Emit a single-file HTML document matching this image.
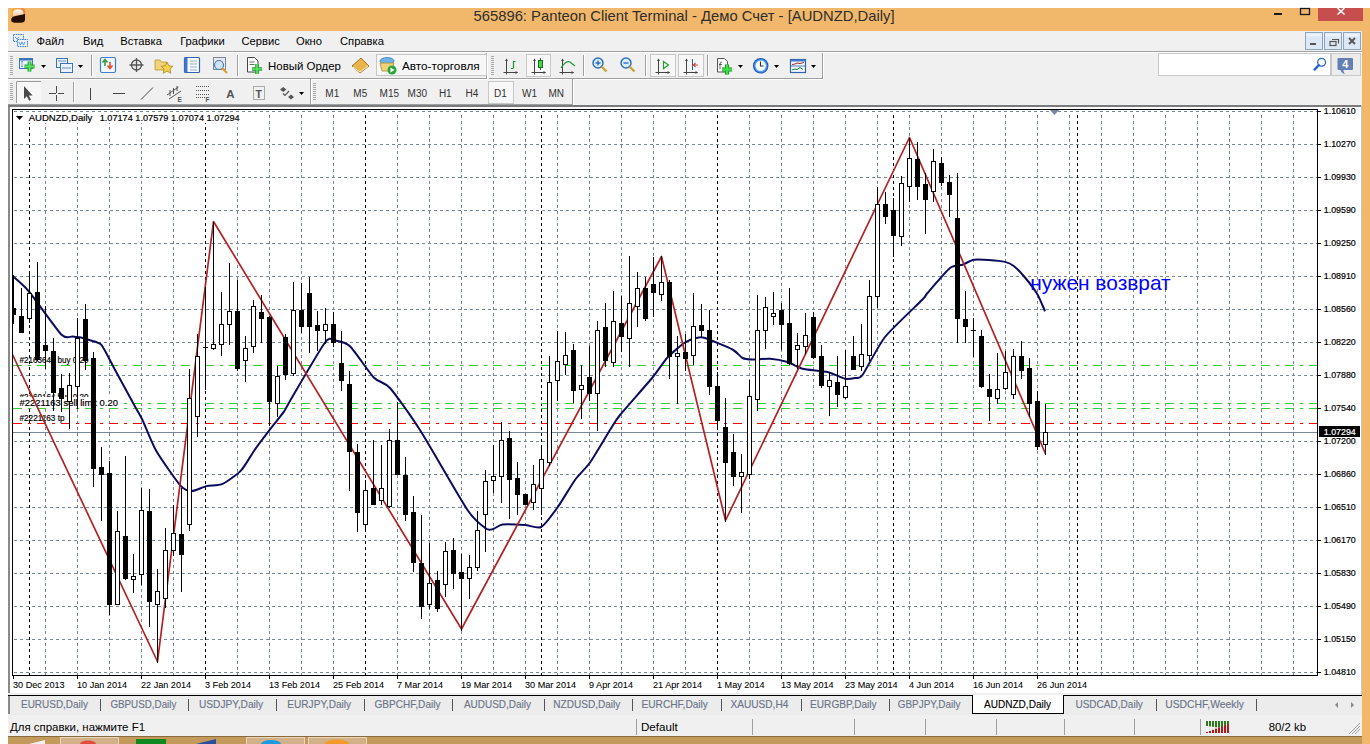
<!DOCTYPE html>
<html><head><meta charset="utf-8"><title>MT4</title>
<style>
html,body{margin:0;padding:0;background:#fff;width:1370px;height:744px;overflow:hidden}
svg{display:block}
text{font-family:"Liberation Sans", sans-serif;white-space:pre}
</style></head><body>
<svg width="1370" height="744" viewBox="0 0 1370 744">
<rect x="8" y="8" width="1362" height="736" fill="#f1b86b" />
<defs><linearGradient id="ig" x1="0" y1="0" x2="1" y2="0"><stop offset="0" stop-color="#f9b233"/><stop offset="1" stop-color="#f47a38"/></linearGradient><linearGradient id="dg" x1="0" y1="0" x2="0" y2="1"><stop offset="0" stop-color="#ffffff"/><stop offset="1" stop-color="#f8b98a"/></linearGradient></defs>
<rect x="11.3" y="8.2" width="14" height="11" rx="3.5" fill="url(#ig)"/>
<path d="M13 13.5 Q13 9.2 18.2 9.2 Q23.5 9.2 23.5 13.5 L23.5 17.5 L13 17.5 Z" fill="url(#dg)"/>
<path d="M11.2 20 Q11.2 16.5 15.5 16 L25 14 L25 19.8 Q25 22.8 20.5 22.8 L15 22.8 Q11.2 22.8 11.2 20 Z" fill="#231003"/>
<text x="473.5" y="20.5" font-size="14.6" fill="#2e2e2e" text-anchor="start" font-weight="normal" textLength="421" lengthAdjust="spacingAndGlyphs" >565896: Panteon Client Terminal - Демо Счет - [AUDNZD,Daily]</text>
<rect x="1274" y="13" width="8" height="2" fill="#1a1a1a" />
<rect x="1300.5" y="8.5" width="9" height="6" fill="none" stroke="#1a1a1a" stroke-width="1.3" />
<rect x="1318" y="8" width="45" height="13" fill="#c74e4e" />
<path d="M1337.5 8 L1344.5 14.5 M1344.5 8 L1337.5 14.5" stroke="#fff" stroke-width="1.6"/>
<rect x="8" y="31" width="1354" height="20" fill="#f0f0f0" />
<g fill="none" stroke="#3b7fd6" stroke-width="1" stroke-dasharray="1.5 0.8"><rect x="13.5" y="34.5" width="10" height="7"/><rect x="17.5" y="39.5" width="10" height="7" fill="#eef4fb"/></g><path d="M19 42 l1.5 3 l1.5 -3 l1.5 3 l1.5 -3" stroke="#3b7fd6" fill="none" stroke-width="0.8"/><path d="M15 37 l2 2 l2 -2" stroke="#3b7fd6" fill="none" stroke-width="0.8"/>
<text x="36.5" y="44.8" font-size="11.2" fill="#000" text-anchor="start" font-weight="normal" >Файл</text>
<text x="83" y="44.8" font-size="11.2" fill="#000" text-anchor="start" font-weight="normal" >Вид</text>
<text x="120.3" y="44.8" font-size="11.2" fill="#000" text-anchor="start" font-weight="normal" >Вставка</text>
<text x="180.2" y="44.8" font-size="11.2" fill="#000" text-anchor="start" font-weight="normal" >Графики</text>
<text x="241.5" y="44.8" font-size="11.2" fill="#000" text-anchor="start" font-weight="normal" >Сервис</text>
<text x="296" y="44.8" font-size="11.2" fill="#000" text-anchor="start" font-weight="normal" >Окно</text>
<text x="340" y="44.8" font-size="11.2" fill="#000" text-anchor="start" font-weight="normal" >Справка</text>
<rect x="1305.5" y="32.5" width="17" height="17" fill="#dce8f5" stroke="#8fa3bb" stroke-width="1"/>
<rect x="1306.5" y="33.5" width="15" height="3" fill="#eaf2fb"/>
<rect x="1324.5" y="32.5" width="17" height="17" fill="#dce8f5" stroke="#8fa3bb" stroke-width="1"/>
<rect x="1325.5" y="33.5" width="15" height="3" fill="#eaf2fb"/>
<rect x="1343.5" y="32.5" width="17" height="17" fill="#dce8f5" stroke="#8fa3bb" stroke-width="1"/>
<rect x="1344.5" y="33.5" width="15" height="3" fill="#eaf2fb"/>
<rect x="1310" y="43" width="6" height="2" fill="#555" />
<g fill="none" stroke="#555" stroke-width="1.2"><rect x="1330" y="41.5" width="6" height="4"/><path d="M1332 39.5 L1338.5 39.5 L1338.5 43.5"/></g>
<path d="M1349 38 L1355 44 M1355 38 L1349 44" stroke="#555" stroke-width="1.8"/>
<rect x="8" y="51" width="1354" height="1" fill="#a0a0a0" />
<rect x="8" y="52" width="1354" height="1" fill="#ffffff" />
<rect x="8" y="53" width="1354" height="52" fill="#f0f0f0" />
<rect x="8" y="78" width="479" height="1" fill="#a0a0a0" />
<rect x="486" y="53" width="1" height="26" fill="#a0a0a0" />
<rect x="8" y="79" width="480" height="1" fill="#ffffff" />
<rect x="487" y="53" width="1" height="27" fill="#ffffff" />
<rect x="489" y="78" width="334" height="1" fill="#a0a0a0" />
<rect x="822" y="53" width="1" height="26" fill="#a0a0a0" />
<rect x="489" y="79" width="335" height="1" fill="#ffffff" />
<rect x="823" y="53" width="1" height="27" fill="#ffffff" />
<rect x="8" y="104" width="303" height="1" fill="#a0a0a0" />
<rect x="310" y="79" width="1" height="26" fill="#a0a0a0" />
<rect x="8" y="105" width="304" height="1" fill="#ffffff" />
<rect x="311" y="79" width="1" height="27" fill="#ffffff" />
<rect x="311" y="104" width="262" height="1" fill="#a0a0a0" />
<rect x="572" y="79" width="1" height="26" fill="#a0a0a0" />
<rect x="311" y="105" width="263" height="1" fill="#ffffff" />
<rect x="573" y="79" width="1" height="27" fill="#ffffff" />
<rect x="10" y="56" width="3" height="1" fill="#a8a8a8" />
<rect x="10" y="58" width="3" height="1" fill="#a8a8a8" />
<rect x="10" y="60" width="3" height="1" fill="#a8a8a8" />
<rect x="10" y="62" width="3" height="1" fill="#a8a8a8" />
<rect x="10" y="64" width="3" height="1" fill="#a8a8a8" />
<rect x="10" y="66" width="3" height="1" fill="#a8a8a8" />
<rect x="10" y="68" width="3" height="1" fill="#a8a8a8" />
<rect x="10" y="70" width="3" height="1" fill="#a8a8a8" />
<rect x="10" y="72" width="3" height="1" fill="#a8a8a8" />
<rect x="10" y="74" width="3" height="1" fill="#a8a8a8" />
<rect x="491" y="56" width="3" height="1" fill="#a8a8a8" />
<rect x="491" y="58" width="3" height="1" fill="#a8a8a8" />
<rect x="491" y="60" width="3" height="1" fill="#a8a8a8" />
<rect x="491" y="62" width="3" height="1" fill="#a8a8a8" />
<rect x="491" y="64" width="3" height="1" fill="#a8a8a8" />
<rect x="491" y="66" width="3" height="1" fill="#a8a8a8" />
<rect x="491" y="68" width="3" height="1" fill="#a8a8a8" />
<rect x="491" y="70" width="3" height="1" fill="#a8a8a8" />
<rect x="491" y="72" width="3" height="1" fill="#a8a8a8" />
<rect x="491" y="74" width="3" height="1" fill="#a8a8a8" />
<rect x="10" y="83" width="3" height="1" fill="#a8a8a8" />
<rect x="10" y="85" width="3" height="1" fill="#a8a8a8" />
<rect x="10" y="87" width="3" height="1" fill="#a8a8a8" />
<rect x="10" y="89" width="3" height="1" fill="#a8a8a8" />
<rect x="10" y="91" width="3" height="1" fill="#a8a8a8" />
<rect x="10" y="93" width="3" height="1" fill="#a8a8a8" />
<rect x="10" y="95" width="3" height="1" fill="#a8a8a8" />
<rect x="10" y="97" width="3" height="1" fill="#a8a8a8" />
<rect x="10" y="99" width="3" height="1" fill="#a8a8a8" />
<rect x="313" y="83" width="3" height="1" fill="#a8a8a8" />
<rect x="313" y="85" width="3" height="1" fill="#a8a8a8" />
<rect x="313" y="87" width="3" height="1" fill="#a8a8a8" />
<rect x="313" y="89" width="3" height="1" fill="#a8a8a8" />
<rect x="313" y="91" width="3" height="1" fill="#a8a8a8" />
<rect x="313" y="93" width="3" height="1" fill="#a8a8a8" />
<rect x="313" y="95" width="3" height="1" fill="#a8a8a8" />
<rect x="313" y="97" width="3" height="1" fill="#a8a8a8" />
<rect x="313" y="99" width="3" height="1" fill="#a8a8a8" />
<rect x="19.5" y="58.5" width="13" height="10" fill="#eaf2fb" stroke="#3d74b9"/><rect x="19.5" y="58.5" width="13" height="2" fill="#3d74b9"/><path d="M22 61 v6 M21 62 l1 -1 l1 1 M21 66 l1 1 l1 -1" stroke="#6c8fb8" stroke-width="0.8" fill="none"/><path d="M24.5 66.5 h10 M29.5 61.5 v10" stroke="#1e9e2a" stroke-width="3.8"/><path d="M24.5 66.5 h10 M29.5 61.5 v10" stroke="#5fe36b" stroke-width="1.8"/>
<path d="M41 65 L46 65 L43.5 68 Z" fill="#000"/>
<rect x="56.5" y="58.5" width="11" height="9" fill="#eaf2fb" stroke="#3d74b9"/><rect x="60.5" y="63.5" width="12" height="9" fill="#eaf2fb" stroke="#3d74b9"/><path d="M62 68 h9 M58 61 h8" stroke="#6c8fb8" stroke-width="1"/>
<path d="M78 65 L83 65 L80.5 68 Z" fill="#000"/>
<rect x="91" y="55" width="1" height="21" fill="#a0a0a0" />
<rect x="92" y="55" width="1" height="21" fill="#ffffff" />
<rect x="100.5" y="57.5" width="15" height="15" rx="1.5" fill="#f4f9ff" stroke="#3d7fcf" stroke-width="1.2"/><path d="M105 66 v-6 M102.5 62.5 L105 59.5 L107.5 62.5" stroke="#2ea23a" stroke-width="1.6" fill="none"/><path d="M110 62 v6 M107.5 65.5 L110 68.5 L112.5 65.5" stroke="#e8502e" stroke-width="1.6" fill="none"/>
<g stroke="#555" fill="none" stroke-width="1.3"><circle cx="136.5" cy="65" r="5"/><path d="M136.5 58 v14 M129.5 65 h14"/></g>
<path d="M155 60 h5 l1.5 2 h5 v8 h-11.5 Z" fill="#f3d27a" stroke="#b8942f" stroke-width="0.8"/><path d="M167 62 l1.8 3.8 l4.2 0.5 l-3 2.8 l0.8 4.1 l-3.8 -2.1 l-3.8 2.1 l0.8 -4.1 l-3 -2.8 l4.2 -0.5 Z" fill="#f6d34a" stroke="#a88420" stroke-width="0.8"/>
<rect x="184.5" y="57.5" width="15" height="15" rx="1" fill="#f8fbff" stroke="#2f63ad" stroke-width="1.2"/><rect x="184.5" y="57.5" width="3" height="15" fill="#3b78c9"/><path d="M190 61 h7 M190 64 h7 M190 67 h7 M190 70 h7" stroke="#8aa4c4" stroke-width="0.9"/>
<rect x="213.5" y="57.5" width="12" height="12" fill="#e6ebf2" stroke="#7a8597"/><circle cx="219" cy="65" r="4.5" fill="#cfe3f7" stroke="#4f79ad" stroke-width="1.2"/><path d="M222 68 l5 5" stroke="#d79b2a" stroke-width="2"/>
<rect x="237" y="55" width="1" height="21" fill="#a0a0a0" />
<rect x="238" y="55" width="1" height="21" fill="#ffffff" />
<path d="M247.5 57.5 h7 l3.5 3.5 v11 h-10.5 Z" fill="#fff" stroke="#444" stroke-width="1"/><path d="M249.5 62 h5 M249.5 64.5 h5" stroke="#444" stroke-width="0.8"/><path d="M252 69 h10 M257 64 v10" stroke="#1e9e2a" stroke-width="3.6"/><path d="M252 69 h10 M257 64 v10" stroke="#5fe36b" stroke-width="1.6"/>
<text x="268" y="70.4" font-size="11.6" fill="#000" text-anchor="start" font-weight="normal" textLength="73" lengthAdjust="spacingAndGlyphs" >Новый Ордер</text>
<path d="M352 66 L361 58 L369 66 L360 73 Z" fill="#e9b44c" stroke="#9b6b1d" stroke-width="0.9"/><path d="M353 67 L360 72 L368 66" stroke="#fff3c8" fill="none" stroke-width="1"/>
<rect x="376.5" y="54.5" width="110" height="21" fill="#f7f7f7" stroke="#c8c8c8"/>
<ellipse cx="387" cy="61" rx="7" ry="3.5" fill="#6fb3e8" stroke="#3b7bb8" stroke-width="0.8"/><path d="M380 63 h14 l-2 8 h-10 Z" fill="#efd27a" stroke="#a88a2c" stroke-width="0.8"/><circle cx="392" cy="70" r="4.5" fill="#2aa53a"/><path d="M390.5 67.5 l4 2.5 l-4 2.5 Z" fill="#fff"/>
<text x="402" y="70.4" font-size="11.6" fill="#000" text-anchor="start" font-weight="normal" textLength="77.6" lengthAdjust="spacingAndGlyphs" >Авто-торговля</text>
<rect x="526.5" y="54.5" width="24" height="22" fill="#f7f7f7" stroke="#c8c8c8"/>
<path d="M506.5 59 V74.5 M503.5 72.5 H517.5" stroke="#444" stroke-width="1" fill="none"/><path d="M505 61 L506.5 58.5 L508 61 Z M515.5 71 L518 72.5 L515.5 74 Z" fill="#444"/>
<path d="M513.5 68 V61.5 H515.5 M511 68.5 H513.5" stroke="#1a9a2a" stroke-width="1.2" fill="none"/>
<path d="M534.5 59 V74.5 M531.5 72.5 H545.5" stroke="#444" stroke-width="1" fill="none"/><path d="M533 61 L534.5 58.5 L536 61 Z M543.5 71 L546 72.5 L543.5 74 Z" fill="#444"/>
<path d="M540.5 58 V70" stroke="#1a6a22" stroke-width="1"/><rect x="538.5" y="60.5" width="4" height="7" fill="#49d34f" stroke="#1a6a22"/>
<path d="M562.5 59 V74.5 M559.5 72.5 H573.5" stroke="#444" stroke-width="1" fill="none"/><path d="M561 61 L562.5 58.5 L564 61 Z M571.5 71 L574 72.5 L571.5 74 Z" fill="#444"/>
<path d="M561 68 Q566 60 570 62 L575 66" stroke="#1a9a2a" fill="none" stroke-width="1.2"/>
<rect x="583" y="55" width="1" height="21" fill="#a0a0a0" />
<rect x="584" y="55" width="1" height="21" fill="#ffffff" />
<circle cx="598" cy="63" r="5" fill="#dbeeff" stroke="#2f6fc0" stroke-width="1.5"/><path d="M595.5 63 h5 M598 60.5 v5" stroke="#2f6fc0" stroke-width="1.4"/><path d="M601.5 66.5 l5 5" stroke="#caa23a" stroke-width="2.4"/>
<circle cx="626" cy="63" r="5" fill="#dbeeff" stroke="#2f6fc0" stroke-width="1.5"/><path d="M623.5 63 h5" stroke="#2f6fc0" stroke-width="1.4"/><path d="M629.5 66.5 l5 5" stroke="#caa23a" stroke-width="2.4"/>
<rect x="645" y="55" width="1" height="21" fill="#a0a0a0" />
<rect x="646" y="55" width="1" height="21" fill="#ffffff" />
<rect x="650.5" y="54.5" width="25" height="22" fill="#f7f7f7" stroke="#c8c8c8"/><rect x="678.5" y="54.5" width="25" height="22" fill="#f7f7f7" stroke="#c8c8c8"/>
<path d="M658.5 59 V74.5 M655.5 72.5 H669.5" stroke="#444" stroke-width="1" fill="none"/><path d="M657 61 L658.5 58.5 L660 61 Z M667.5 71 L670 72.5 L667.5 74 Z" fill="#444"/>
<path d="M686.5 59 V74.5 M683.5 72.5 H697.5" stroke="#444" stroke-width="1" fill="none"/><path d="M685 61 L686.5 58.5 L688 61 Z M695.5 71 L698 72.5 L695.5 74 Z" fill="#444"/>
<path d="M663.5 61.5 L668.5 65 L663.5 68.5 Z" fill="#fff" stroke="#1fa02f" stroke-width="1.2"/><path d="M692.5 59 V70" stroke="#2f5fb0" stroke-width="1"/><path d="M698 65 h-4 M695.5 63 l-2 2 l2 2" stroke="#d8402a" stroke-width="1.2" fill="none"/>
<rect x="707" y="55" width="1" height="21" fill="#a0a0a0" />
<rect x="708" y="55" width="1" height="21" fill="#ffffff" />
<path d="M717.5 58.5 h7 l3 3 v10.5 h-10 Z" fill="#fafafa" stroke="#555"/><path d="M722 62 q-2 0 -2 2 v5 M719 64.5 h3" stroke="#444" fill="none" stroke-width="0.8"/><path d="M722 69.5 h10 M727 64.5 v10" stroke="#1b8f25" stroke-width="4.2"/><path d="M722 69.5 h10 M727 64.5 v10" stroke="#3ee04a" stroke-width="2.4"/>
<path d="M738 65 L743 65 L740.5 68 Z" fill="#000"/>
<circle cx="760.7" cy="65.8" r="7.8" fill="#1f5fbf"/><circle cx="760.7" cy="65.8" r="6.6" fill="#4f9ae8"/><circle cx="760.7" cy="65.8" r="5.2" fill="#f4f8ff"/><path d="M760.5 61.5 v4.5 h3" stroke="#333" fill="none" stroke-width="1.1"/>
<path d="M774 65 L779 65 L776.5 68 Z" fill="#000"/>
<rect x="790.5" y="59.5" width="15" height="13" fill="#f4f8ff" stroke="#2f63ad" stroke-width="1.2"/><rect x="790.5" y="59.5" width="15" height="2" fill="#3b78c9"/><path d="M791 66 h14" stroke="#2f63ad" stroke-width="0.8"/><path d="M792 64.5 l3 -0.5 l2 -1 l3 0.5 l4 -1" stroke="#a52a1a" fill="none" stroke-width="1"/><path d="M792 70 l3 -1 l2 0.5 l3 -2 l3 2" stroke="#1e8a2e" fill="none" stroke-width="1"/>
<path d="M811 65 L816 65 L813.5 68 Z" fill="#000"/>
<rect x="1158.5" y="53.5" width="172" height="22" fill="#ffffff" stroke="#c9c9c9"/>
<circle cx="1321.6" cy="62.3" r="3.9" fill="#fff" stroke="#2a62d0" stroke-width="1.3"/><path d="M1318.8 65.2 L1314.6 69.6" stroke="#2a62d0" stroke-width="2.4" stroke-linecap="round"/>
<rect x="1331.5" y="53.5" width="29" height="22" fill="#ececec" stroke="#c9c9c9"/>
<path d="M1338.5 58 h13.5 q1 0 1 1 v10 q0 1 -1 1 h-8.5 q-0.5 2.5 1.5 4 q-3.5 -0.5 -4.5 -4 h-2 q-1 0 -1 -1 v-10 q0 -1 1 -1 Z" fill="#6280b4"/>
<text x="1345.3" y="67.5" font-size="11" fill="#fff" text-anchor="middle" font-weight="bold" >4</text>
<rect x="16" y="81" width="25" height="22" fill="#f7f7f7"/><path d="M16.5 103 V81.5 H41" stroke="#9a9a9a" fill="none"/>
<path d="M24 86 L24 99 L26.8 96.2 L29.2 100.8 L31 99.8 L28.8 95.4 L32.6 95.4 Z" fill="#4a4a4a"/>
<path d="M56.5 86 V92.5 M56.5 94.5 V101 M49 93.5 H55.5 M57.5 93.5 H64" stroke="#4a4a4a" stroke-width="1" shape-rendering="crispEdges"/>
<rect x="73" y="82" width="1" height="20" fill="#a0a0a0" />
<rect x="74" y="82" width="1" height="20" fill="#ffffff" />
<line x1="90.5" y1="88" x2="90.5" y2="100" stroke="#444" stroke-width="1" />
<line x1="113" y1="93.5" x2="125" y2="93.5" stroke="#444" stroke-width="1" />
<line x1="141" y1="99.5" x2="153" y2="87.5" stroke="#444" stroke-width="1" />
<g stroke="#555" stroke-width="1" fill="none"><path d="M167 95 L178.5 87 M169 99 L181 91"/><path d="M170 90 v6 M173.5 88 v6 M177 86 v5"/></g>
<text x="177.5" y="101.8" font-size="6.5" fill="#555" text-anchor="start" font-weight="bold" >E</text>
<g stroke="#555" stroke-width="1" stroke-dasharray="1 1"><path d="M196 86.5 h13 M196 90.5 h13 M196 94.5 h13 M196 97.5 h9"/></g>
<text x="205.5" y="101.8" font-size="6.5" fill="#555" text-anchor="start" font-weight="bold" >F</text>
<text x="230.5" y="97.5" font-size="11.5" fill="#555" text-anchor="middle" font-weight="bold" >A</text>
<rect x="253.5" y="86.5" width="11" height="13" fill="none" stroke="#666" stroke-dasharray="1 1"/>
<text x="258.8" y="98" font-size="10.5" fill="#555" text-anchor="middle" font-weight="bold" >T</text>
<path d="M280 89.5 L283.2 87 L286.4 89.5 L283.2 92 Z M288 97 L291 94.5 L294 97 L291 99.5 Z" fill="#555"/><path d="M283 93.5 L285 95.5 L289 91" stroke="#555" fill="none" stroke-width="1.2"/>
<path d="M299 92 L304 92 L301.5 95 Z" fill="#000"/>
<text x="325.3" y="97" font-size="10" fill="#333" text-anchor="start" font-weight="normal" >M1</text>
<text x="353.3" y="97" font-size="10" fill="#333" text-anchor="start" font-weight="normal" >M5</text>
<text x="379.6" y="97" font-size="10" fill="#333" text-anchor="start" font-weight="normal" >M15</text>
<text x="407.6" y="97" font-size="10" fill="#333" text-anchor="start" font-weight="normal" >M30</text>
<text x="438.9" y="97" font-size="10" fill="#333" text-anchor="start" font-weight="normal" >H1</text>
<text x="465.6" y="97" font-size="10" fill="#333" text-anchor="start" font-weight="normal" >H4</text>
<rect x="488.5" y="81.5" width="25" height="22" fill="#f7f7f7" stroke="#c8c8c8"/>
<text x="494" y="97" font-size="10" fill="#333" text-anchor="start" font-weight="normal" >D1</text>
<text x="522" y="97" font-size="10" fill="#333" text-anchor="start" font-weight="normal" >W1</text>
<text x="548.5" y="97" font-size="10" fill="#333" text-anchor="start" font-weight="normal" >MN</text>
<rect x="8" y="105" width="1354" height="2" fill="#7a7a7a" />
<rect x="8" y="107" width="1354" height="588" fill="#ffffff" />
<rect x="8" y="107" width="2" height="587" fill="#8a8a8a" />
<rect x="1361" y="105" width="1" height="590" fill="#c8c8c8" />
<rect x="8" y="693" width="1353" height="2" fill="#f0f0f0" />
<rect x="8" y="695" width="1354" height="1" fill="#000000" />
<defs><clipPath id="cc"><rect x="13" y="110" width="1304" height="565"/></clipPath></defs>
<g clip-path="url(#cc)" shape-rendering="crispEdges">
<line x1="14" y1="111.5" x2="1317" y2="111.5" stroke="#778899" stroke-width="1" stroke-dasharray="3 3"/>
<line x1="14" y1="144.5" x2="1317" y2="144.5" stroke="#778899" stroke-width="1" stroke-dasharray="3 3"/>
<line x1="14" y1="177.5" x2="1317" y2="177.5" stroke="#778899" stroke-width="1" stroke-dasharray="3 3"/>
<line x1="14" y1="210.5" x2="1317" y2="210.5" stroke="#778899" stroke-width="1" stroke-dasharray="3 3"/>
<line x1="14" y1="243.5" x2="1317" y2="243.5" stroke="#778899" stroke-width="1" stroke-dasharray="3 3"/>
<line x1="14" y1="276.5" x2="1317" y2="276.5" stroke="#778899" stroke-width="1" stroke-dasharray="3 3"/>
<line x1="14" y1="309.5" x2="1317" y2="309.5" stroke="#778899" stroke-width="1" stroke-dasharray="3 3"/>
<line x1="14" y1="342.5" x2="1317" y2="342.5" stroke="#778899" stroke-width="1" stroke-dasharray="3 3"/>
<line x1="14" y1="375.5" x2="1317" y2="375.5" stroke="#778899" stroke-width="1" stroke-dasharray="3 3"/>
<line x1="14" y1="408.5" x2="1317" y2="408.5" stroke="#778899" stroke-width="1" stroke-dasharray="3 3"/>
<line x1="14" y1="441.5" x2="1317" y2="441.5" stroke="#778899" stroke-width="1" stroke-dasharray="3 3"/>
<line x1="14" y1="474.5" x2="1317" y2="474.5" stroke="#778899" stroke-width="1" stroke-dasharray="3 3"/>
<line x1="14" y1="507.5" x2="1317" y2="507.5" stroke="#778899" stroke-width="1" stroke-dasharray="3 3"/>
<line x1="14" y1="540.5" x2="1317" y2="540.5" stroke="#778899" stroke-width="1" stroke-dasharray="3 3"/>
<line x1="14" y1="573.5" x2="1317" y2="573.5" stroke="#778899" stroke-width="1" stroke-dasharray="3 3"/>
<line x1="14" y1="606.5" x2="1317" y2="606.5" stroke="#778899" stroke-width="1" stroke-dasharray="3 3"/>
<line x1="14" y1="639.5" x2="1317" y2="639.5" stroke="#778899" stroke-width="1" stroke-dasharray="3 3"/>
<line x1="14" y1="672.5" x2="1317" y2="672.5" stroke="#778899" stroke-width="1" stroke-dasharray="3 3"/>
<line x1="45.5" y1="115" x2="45.5" y2="675" stroke="#778899" stroke-width="1" stroke-dasharray="3 3"/>
<line x1="77.5" y1="115" x2="77.5" y2="675" stroke="#778899" stroke-width="1" stroke-dasharray="3 3"/>
<line x1="109.5" y1="115" x2="109.5" y2="675" stroke="#778899" stroke-width="1" stroke-dasharray="3 3"/>
<line x1="141.5" y1="115" x2="141.5" y2="675" stroke="#778899" stroke-width="1" stroke-dasharray="3 3"/>
<line x1="173.5" y1="115" x2="173.5" y2="675" stroke="#778899" stroke-width="1" stroke-dasharray="3 3"/>
<line x1="205.5" y1="115" x2="205.5" y2="675" stroke="#778899" stroke-width="1" stroke-dasharray="3 3"/>
<line x1="237.5" y1="115" x2="237.5" y2="675" stroke="#778899" stroke-width="1" stroke-dasharray="3 3"/>
<line x1="269.5" y1="115" x2="269.5" y2="675" stroke="#778899" stroke-width="1" stroke-dasharray="3 3"/>
<line x1="301.5" y1="115" x2="301.5" y2="675" stroke="#778899" stroke-width="1" stroke-dasharray="3 3"/>
<line x1="333.5" y1="115" x2="333.5" y2="675" stroke="#778899" stroke-width="1" stroke-dasharray="3 3"/>
<line x1="365.5" y1="115" x2="365.5" y2="675" stroke="#778899" stroke-width="1" stroke-dasharray="3 3"/>
<line x1="397.5" y1="115" x2="397.5" y2="675" stroke="#778899" stroke-width="1" stroke-dasharray="3 3"/>
<line x1="429.5" y1="115" x2="429.5" y2="675" stroke="#778899" stroke-width="1" stroke-dasharray="3 3"/>
<line x1="461.5" y1="115" x2="461.5" y2="675" stroke="#778899" stroke-width="1" stroke-dasharray="3 3"/>
<line x1="493.5" y1="115" x2="493.5" y2="675" stroke="#778899" stroke-width="1" stroke-dasharray="3 3"/>
<line x1="525.5" y1="115" x2="525.5" y2="675" stroke="#778899" stroke-width="1" stroke-dasharray="3 3"/>
<line x1="557.5" y1="115" x2="557.5" y2="675" stroke="#778899" stroke-width="1" stroke-dasharray="3 3"/>
<line x1="589.5" y1="115" x2="589.5" y2="675" stroke="#778899" stroke-width="1" stroke-dasharray="3 3"/>
<line x1="621.5" y1="115" x2="621.5" y2="675" stroke="#778899" stroke-width="1" stroke-dasharray="3 3"/>
<line x1="653.5" y1="115" x2="653.5" y2="675" stroke="#778899" stroke-width="1" stroke-dasharray="3 3"/>
<line x1="685.5" y1="115" x2="685.5" y2="675" stroke="#778899" stroke-width="1" stroke-dasharray="3 3"/>
<line x1="717.5" y1="115" x2="717.5" y2="675" stroke="#778899" stroke-width="1" stroke-dasharray="3 3"/>
<line x1="749.5" y1="115" x2="749.5" y2="675" stroke="#778899" stroke-width="1" stroke-dasharray="3 3"/>
<line x1="781.5" y1="115" x2="781.5" y2="675" stroke="#778899" stroke-width="1" stroke-dasharray="3 3"/>
<line x1="813.5" y1="115" x2="813.5" y2="675" stroke="#778899" stroke-width="1" stroke-dasharray="3 3"/>
<line x1="845.5" y1="115" x2="845.5" y2="675" stroke="#778899" stroke-width="1" stroke-dasharray="3 3"/>
<line x1="877.5" y1="115" x2="877.5" y2="675" stroke="#778899" stroke-width="1" stroke-dasharray="3 3"/>
<line x1="909.5" y1="115" x2="909.5" y2="675" stroke="#778899" stroke-width="1" stroke-dasharray="3 3"/>
<line x1="941.5" y1="115" x2="941.5" y2="675" stroke="#778899" stroke-width="1" stroke-dasharray="3 3"/>
<line x1="973.5" y1="115" x2="973.5" y2="675" stroke="#778899" stroke-width="1" stroke-dasharray="3 3"/>
<line x1="1005.5" y1="115" x2="1005.5" y2="675" stroke="#778899" stroke-width="1" stroke-dasharray="3 3"/>
<line x1="1037.5" y1="115" x2="1037.5" y2="675" stroke="#778899" stroke-width="1" stroke-dasharray="3 3"/>
<line x1="1069.5" y1="115" x2="1069.5" y2="675" stroke="#778899" stroke-width="1" stroke-dasharray="3 3"/>
<line x1="1101.5" y1="115" x2="1101.5" y2="675" stroke="#778899" stroke-width="1" stroke-dasharray="3 3"/>
<line x1="1133.5" y1="115" x2="1133.5" y2="675" stroke="#778899" stroke-width="1" stroke-dasharray="3 3"/>
<line x1="1165.5" y1="115" x2="1165.5" y2="675" stroke="#778899" stroke-width="1" stroke-dasharray="3 3"/>
<line x1="1197.5" y1="115" x2="1197.5" y2="675" stroke="#778899" stroke-width="1" stroke-dasharray="3 3"/>
<line x1="1229.5" y1="115" x2="1229.5" y2="675" stroke="#778899" stroke-width="1" stroke-dasharray="3 3"/>
<line x1="1261.5" y1="115" x2="1261.5" y2="675" stroke="#778899" stroke-width="1" stroke-dasharray="3 3"/>
<line x1="1293.5" y1="115" x2="1293.5" y2="675" stroke="#778899" stroke-width="1" stroke-dasharray="3 3"/>
<line x1="29.5" y1="115" x2="29.5" y2="675" stroke="#000" stroke-width="1" stroke-dasharray="3 3"/>
<line x1="205.5" y1="115" x2="205.5" y2="675" stroke="#000" stroke-width="1" stroke-dasharray="3 3"/>
<line x1="365.5" y1="115" x2="365.5" y2="675" stroke="#000" stroke-width="1" stroke-dasharray="3 3"/>
<line x1="541.5" y1="115" x2="541.5" y2="675" stroke="#000" stroke-width="1" stroke-dasharray="3 3"/>
<line x1="717.5" y1="115" x2="717.5" y2="675" stroke="#000" stroke-width="1" stroke-dasharray="3 3"/>
<line x1="893.5" y1="115" x2="893.5" y2="675" stroke="#000" stroke-width="1" stroke-dasharray="3 3"/>
<line x1="1077.5" y1="115" x2="1077.5" y2="675" stroke="#000" stroke-width="1" stroke-dasharray="3 3"/>
</g>
<g clip-path="url(#cc)" shape-rendering="crispEdges">
<line x1="13" y1="365.5" x2="1317" y2="365.5" stroke="#fff" stroke-width="1"/>
<line x1="13" y1="365.5" x2="1317" y2="365.5" stroke="#32cd32" stroke-width="1" stroke-dasharray="9 6 3 6" stroke-dashoffset="0"/>
<line x1="13" y1="403.5" x2="1317" y2="403.5" stroke="#fff" stroke-width="1"/>
<line x1="13" y1="403.5" x2="1317" y2="403.5" stroke="#32cd32" stroke-width="1" stroke-dasharray="9 6 3 6" stroke-dashoffset="0"/>
<line x1="13" y1="408.5" x2="1317" y2="408.5" stroke="#fff" stroke-width="1"/>
<line x1="13" y1="408.5" x2="1317" y2="408.5" stroke="#32cd32" stroke-width="1" stroke-dasharray="9 6 3 6" stroke-dashoffset="0"/>
<line x1="13" y1="423.5" x2="1317" y2="423.5" stroke="#fff" stroke-width="1"/>
<line x1="13" y1="423.5" x2="1317" y2="423.5" stroke="#ff0000" stroke-width="1" stroke-dasharray="9 6 3 6" stroke-dashoffset="0"/>
<line x1="13" y1="432.5" x2="1317" y2="432.5" stroke="#778899" stroke-width="1"/>
</g>
<text x="19.5" y="362.7" font-size="9.6" fill="#000" stroke="#000" stroke-width="0.2" textLength="69" lengthAdjust="spacingAndGlyphs">#2163646 buy 0.20</text>
<text x="19.5" y="400.3" font-size="9.6" fill="#000" stroke="#000" stroke-width="0.2" textLength="69" lengthAdjust="spacingAndGlyphs">#2160164 buy 0.20</text>
<rect x="13" y="397" width="106" height="9.5" fill="#fff"/>
<text x="19.5" y="405.6" font-size="9.6" fill="#000" stroke="#000" stroke-width="0.2" textLength="98.5" lengthAdjust="spacingAndGlyphs">#2221163 sell limit 0.20</text>
<text x="19.5" y="421" font-size="9.6" fill="#000" stroke="#000" stroke-width="0.2" textLength="45" lengthAdjust="spacingAndGlyphs">#2221163 tp</text>
<g clip-path="url(#cc)"><path d="M12,275.5 C13.86,277.25 23.28,284.69 28.75,291.25 C34.22,297.81 56.39,329.46 61.25,334.5 C66.11,339.54 70.31,336.27 72.5,336.6 C74.69,336.93 79.06,337.09 81,337.5 C82.94,337.91 87.73,339.48 90,340.3 C92.27,341.12 98.61,341.60 101.4,344.9 C104.19,348.20 111.29,363.02 115.1,370 C118.91,376.98 132.64,402.11 135.7,407.7 C138.76,413.29 140.31,415.48 142.6,420.3 C144.89,425.12 152.11,443.87 156.3,451.1 C160.49,458.33 176.37,480.96 180.3,485.4 C184.23,489.84 188.78,491.02 191.7,491.1 C194.62,491.18 203.17,486.91 206.6,486.1 C210.03,485.29 218.79,485.52 222.6,483.8 C226.41,482.08 237.34,474.36 240.9,470.6 C244.46,466.84 251.56,454.32 254.6,450 C257.64,445.68 265.00,436.02 268.3,431.7 C271.60,427.38 281.89,414.52 284.3,411.1 C286.71,407.68 285.48,408.52 290,400.9 C294.52,393.28 320.00,349.21 325,342.5 C330.00,335.79 332.22,340.08 335,340.5 C337.78,340.92 345.69,342.14 350,346.25 C354.31,350.36 369.31,372.86 373.75,377.5 C378.19,382.14 384.86,382.17 390,388 C395.14,393.83 411.39,416.44 420,430 C428.61,443.56 460.14,499.03 467.5,510 C474.86,520.97 483.33,526.67 486.25,528.75 C489.17,530.83 491.94,529.22 493.75,528.75 C495.56,528.28 499.03,524.92 502.5,524.5 C505.97,524.08 520.69,524.72 525,525 C529.31,525.28 537.64,528.94 541.25,527 C544.86,525.06 553.75,512.72 557.5,507.5 C561.25,502.28 571.39,485.00 575,480 C578.61,475.00 586.11,468.06 590,462.5 C593.89,456.94 606.67,435.28 610,430 C613.33,424.72 615.28,420.83 620,415 C624.72,409.17 647.22,383.89 652.5,377.5 C657.78,371.11 663.89,361.39 667.5,357.5 C671.11,353.61 681.53,344.72 685,342.5 C688.47,340.28 696.53,338.00 698.75,337.5 C700.97,337.00 701.25,336.67 705,338 C708.75,339.33 728.33,347.28 732.5,349.5 C736.67,351.72 740.28,356.89 742.5,358 C744.72,359.11 749.44,359.42 752.5,359.5 C755.56,359.58 766.11,358.47 770,358.75 C773.89,359.03 783.89,360.89 787.5,362 C791.11,363.11 798.06,367.64 802.5,368.75 C806.94,369.86 822.78,370.89 827.5,372 C832.22,373.11 841.94,378.08 845,378.75 C848.06,379.42 853.06,378.42 855,378 C856.94,377.58 859.17,379.56 862.5,375 C865.83,370.44 878.33,345.39 885,337 C891.67,328.61 917.78,304.39 922.5,299.5 C927.22,294.61 924.44,296.50 927.5,293 C930.56,289.50 946.11,271.14 950,268 C953.89,264.86 959.86,265.67 962.5,264.75 C965.14,263.83 970.83,260.28 973.75,259.75 C976.67,259.22 985.28,259.76 988.75,260 C992.22,260.24 1002.22,261.23 1005,261.9 C1007.78,262.57 1011.53,264.27 1013.75,266 C1015.97,267.73 1022.36,274.34 1025,277.5 C1027.64,280.66 1035.28,290.65 1037.5,294.4 C1039.72,298.15 1044.17,309.38 1045,311.25" fill="none" stroke="#0c0c5e" stroke-width="2" stroke-linejoin="round"/>
<polyline points="12,353.5 157.5,661.5 213.5,221.5 461.5,629 661.5,256.5 725.5,520.5 909.5,137.5 1045.5,453.75" fill="none" stroke="#b22222" stroke-width="1.7" stroke-linejoin="round"/>
</g>
<g clip-path="url(#cc)" shape-rendering="crispEdges">
<rect x="13" y="275" width="1" height="49" fill="#000"/>
<rect x="11" y="308" width="5" height="7" fill="#000"/>
<rect x="21" y="288" width="1" height="45" fill="#000"/>
<rect x="19" y="316" width="5" height="17" fill="#000"/>
<rect x="29" y="271" width="1" height="52" fill="#000"/>
<rect x="27" y="293" width="5" height="26" fill="#000"/>
<rect x="28" y="294" width="3" height="24" fill="#fff"/>
<rect x="37" y="262" width="1" height="99" fill="#000"/>
<rect x="35" y="292" width="5" height="68" fill="#000"/>
<rect x="45" y="306" width="1" height="63" fill="#000"/>
<rect x="43" y="345" width="5" height="6" fill="#000"/>
<rect x="53" y="338" width="1" height="73" fill="#000"/>
<rect x="51" y="351" width="5" height="42" fill="#000"/>
<rect x="61" y="374" width="1" height="38" fill="#000"/>
<rect x="59" y="388" width="5" height="11" fill="#000"/>
<rect x="69" y="373" width="1" height="56" fill="#000"/>
<rect x="67" y="385" width="5" height="17" fill="#000"/>
<rect x="68" y="386" width="3" height="15" fill="#fff"/>
<rect x="77" y="318" width="1" height="91" fill="#000"/>
<rect x="75" y="338" width="5" height="49" fill="#000"/>
<rect x="76" y="339" width="3" height="47" fill="#fff"/>
<rect x="85" y="304" width="1" height="66" fill="#000"/>
<rect x="83" y="319" width="5" height="42" fill="#000"/>
<rect x="93" y="352" width="1" height="135" fill="#000"/>
<rect x="91" y="358" width="5" height="111" fill="#000"/>
<rect x="101" y="447" width="1" height="74" fill="#000"/>
<rect x="99" y="467" width="5" height="8" fill="#000"/>
<rect x="109" y="461" width="1" height="154" fill="#000"/>
<rect x="107" y="473" width="5" height="132" fill="#000"/>
<rect x="117" y="511" width="1" height="94" fill="#000"/>
<rect x="115" y="531" width="5" height="74" fill="#000"/>
<rect x="116" y="532" width="3" height="72" fill="#fff"/>
<rect x="125" y="456" width="1" height="124" fill="#000"/>
<rect x="123" y="536" width="5" height="43" fill="#000"/>
<rect x="133" y="554" width="1" height="39" fill="#000"/>
<rect x="131" y="576" width="5" height="4" fill="#000"/>
<rect x="132" y="577" width="3" height="2" fill="#fff"/>
<rect x="141" y="488" width="1" height="97" fill="#000"/>
<rect x="139" y="510" width="5" height="65" fill="#000"/>
<rect x="140" y="511" width="3" height="63" fill="#fff"/>
<rect x="149" y="489" width="1" height="138" fill="#000"/>
<rect x="147" y="511" width="5" height="91" fill="#000"/>
<rect x="157" y="569" width="1" height="94" fill="#000"/>
<rect x="155" y="591" width="5" height="14" fill="#000"/>
<rect x="156" y="592" width="3" height="12" fill="#fff"/>
<rect x="165" y="528" width="1" height="80" fill="#000"/>
<rect x="163" y="550" width="5" height="49" fill="#000"/>
<rect x="164" y="551" width="3" height="47" fill="#fff"/>
<rect x="173" y="505" width="1" height="51" fill="#000"/>
<rect x="171" y="533" width="5" height="18" fill="#000"/>
<rect x="172" y="534" width="3" height="16" fill="#fff"/>
<rect x="181" y="488" width="1" height="104" fill="#000"/>
<rect x="179" y="534" width="5" height="21" fill="#000"/>
<rect x="189" y="369" width="1" height="162" fill="#000"/>
<rect x="187" y="398" width="5" height="127" fill="#000"/>
<rect x="188" y="399" width="3" height="125" fill="#fff"/>
<rect x="197" y="334" width="1" height="103" fill="#000"/>
<rect x="195" y="356" width="5" height="61" fill="#000"/>
<rect x="196" y="357" width="3" height="59" fill="#fff"/>
<rect x="205" y="287" width="1" height="103" fill="#000"/>
<rect x="203" y="347" width="5" height="1" fill="#000"/>
<rect x="213" y="222" width="1" height="128" fill="#000"/>
<rect x="211" y="344" width="5" height="5" fill="#000"/>
<rect x="212" y="345" width="3" height="3" fill="#fff"/>
<rect x="221" y="292" width="1" height="64" fill="#000"/>
<rect x="219" y="324" width="5" height="21" fill="#000"/>
<rect x="220" y="325" width="3" height="19" fill="#fff"/>
<rect x="229" y="263" width="1" height="82" fill="#000"/>
<rect x="227" y="311" width="5" height="14" fill="#000"/>
<rect x="228" y="312" width="3" height="12" fill="#fff"/>
<rect x="237" y="280" width="1" height="91" fill="#000"/>
<rect x="235" y="311" width="5" height="58" fill="#000"/>
<rect x="245" y="336" width="1" height="46" fill="#000"/>
<rect x="243" y="348" width="5" height="13" fill="#000"/>
<rect x="244" y="349" width="3" height="11" fill="#fff"/>
<rect x="253" y="300" width="1" height="53" fill="#000"/>
<rect x="251" y="306" width="5" height="41" fill="#000"/>
<rect x="252" y="307" width="3" height="39" fill="#fff"/>
<rect x="261" y="295" width="1" height="48" fill="#000"/>
<rect x="259" y="312" width="5" height="7" fill="#000"/>
<rect x="269" y="316" width="1" height="110" fill="#000"/>
<rect x="267" y="317" width="5" height="85" fill="#000"/>
<rect x="277" y="366" width="1" height="51" fill="#000"/>
<rect x="275" y="376" width="5" height="28" fill="#000"/>
<rect x="276" y="377" width="3" height="26" fill="#fff"/>
<rect x="285" y="334" width="1" height="46" fill="#000"/>
<rect x="283" y="337" width="5" height="38" fill="#000"/>
<rect x="293" y="282" width="1" height="94" fill="#000"/>
<rect x="291" y="310" width="5" height="64" fill="#000"/>
<rect x="292" y="311" width="3" height="62" fill="#fff"/>
<rect x="301" y="283" width="1" height="50" fill="#000"/>
<rect x="299" y="310" width="5" height="17" fill="#000"/>
<rect x="309" y="277" width="1" height="76" fill="#000"/>
<rect x="307" y="293" width="5" height="34" fill="#000"/>
<rect x="317" y="311" width="1" height="40" fill="#000"/>
<rect x="315" y="325" width="5" height="6" fill="#000"/>
<rect x="325" y="308" width="1" height="36" fill="#000"/>
<rect x="323" y="324" width="5" height="7" fill="#000"/>
<rect x="324" y="325" width="3" height="5" fill="#fff"/>
<rect x="333" y="312" width="1" height="35" fill="#000"/>
<rect x="331" y="324" width="5" height="19" fill="#000"/>
<rect x="341" y="331" width="1" height="60" fill="#000"/>
<rect x="339" y="363" width="5" height="18" fill="#000"/>
<rect x="349" y="371" width="1" height="120" fill="#000"/>
<rect x="347" y="384" width="5" height="68" fill="#000"/>
<rect x="357" y="444" width="1" height="88" fill="#000"/>
<rect x="355" y="452" width="5" height="61" fill="#000"/>
<rect x="365" y="480" width="1" height="52" fill="#000"/>
<rect x="363" y="490" width="5" height="35" fill="#000"/>
<rect x="364" y="491" width="3" height="33" fill="#fff"/>
<rect x="373" y="440" width="1" height="65" fill="#000"/>
<rect x="371" y="488" width="5" height="17" fill="#000"/>
<rect x="381" y="445" width="1" height="60" fill="#000"/>
<rect x="379" y="488" width="5" height="13" fill="#000"/>
<rect x="380" y="489" width="3" height="11" fill="#fff"/>
<rect x="389" y="429" width="1" height="79" fill="#000"/>
<rect x="387" y="440" width="5" height="67" fill="#000"/>
<rect x="388" y="441" width="3" height="65" fill="#fff"/>
<rect x="397" y="402" width="1" height="73" fill="#000"/>
<rect x="395" y="440" width="5" height="35" fill="#000"/>
<rect x="405" y="457" width="1" height="64" fill="#000"/>
<rect x="403" y="475" width="5" height="40" fill="#000"/>
<rect x="413" y="496" width="1" height="76" fill="#000"/>
<rect x="411" y="512" width="5" height="51" fill="#000"/>
<rect x="421" y="515" width="1" height="104" fill="#000"/>
<rect x="419" y="563" width="5" height="44" fill="#000"/>
<rect x="429" y="543" width="1" height="66" fill="#000"/>
<rect x="427" y="583" width="5" height="22" fill="#000"/>
<rect x="428" y="584" width="3" height="20" fill="#fff"/>
<rect x="437" y="571" width="1" height="41" fill="#000"/>
<rect x="435" y="580" width="5" height="29" fill="#000"/>
<rect x="445" y="542" width="1" height="55" fill="#000"/>
<rect x="443" y="551" width="5" height="34" fill="#000"/>
<rect x="444" y="552" width="3" height="32" fill="#fff"/>
<rect x="453" y="538" width="1" height="51" fill="#000"/>
<rect x="451" y="550" width="5" height="24" fill="#000"/>
<rect x="461" y="554" width="1" height="77" fill="#000"/>
<rect x="459" y="572" width="5" height="7" fill="#000"/>
<rect x="469" y="555" width="1" height="44" fill="#000"/>
<rect x="467" y="567" width="5" height="12" fill="#000"/>
<rect x="468" y="568" width="3" height="10" fill="#fff"/>
<rect x="477" y="511" width="1" height="60" fill="#000"/>
<rect x="475" y="530" width="5" height="38" fill="#000"/>
<rect x="476" y="531" width="3" height="36" fill="#fff"/>
<rect x="485" y="470" width="1" height="82" fill="#000"/>
<rect x="483" y="481" width="5" height="34" fill="#000"/>
<rect x="484" y="482" width="3" height="32" fill="#fff"/>
<rect x="493" y="445" width="1" height="48" fill="#000"/>
<rect x="491" y="476" width="5" height="5" fill="#000"/>
<rect x="492" y="477" width="3" height="3" fill="#fff"/>
<rect x="501" y="422" width="1" height="81" fill="#000"/>
<rect x="499" y="440" width="5" height="37" fill="#000"/>
<rect x="500" y="441" width="3" height="35" fill="#fff"/>
<rect x="509" y="431" width="1" height="88" fill="#000"/>
<rect x="507" y="438" width="5" height="42" fill="#000"/>
<rect x="517" y="462" width="1" height="53" fill="#000"/>
<rect x="515" y="478" width="5" height="17" fill="#000"/>
<rect x="525" y="494" width="1" height="11" fill="#000"/>
<rect x="523" y="494" width="5" height="11" fill="#000"/>
<rect x="533" y="465" width="1" height="45" fill="#000"/>
<rect x="531" y="484" width="5" height="19" fill="#000"/>
<rect x="532" y="485" width="3" height="17" fill="#fff"/>
<rect x="541" y="445" width="1" height="70" fill="#000"/>
<rect x="539" y="459" width="5" height="30" fill="#000"/>
<rect x="540" y="460" width="3" height="28" fill="#fff"/>
<rect x="549" y="356" width="1" height="110" fill="#000"/>
<rect x="547" y="382" width="5" height="81" fill="#000"/>
<rect x="548" y="383" width="3" height="79" fill="#fff"/>
<rect x="557" y="331" width="1" height="70" fill="#000"/>
<rect x="555" y="361" width="5" height="20" fill="#000"/>
<rect x="556" y="362" width="3" height="18" fill="#fff"/>
<rect x="565" y="332" width="1" height="43" fill="#000"/>
<rect x="563" y="355" width="5" height="10" fill="#000"/>
<rect x="564" y="356" width="3" height="8" fill="#fff"/>
<rect x="573" y="344" width="1" height="59" fill="#000"/>
<rect x="571" y="350" width="5" height="41" fill="#000"/>
<rect x="581" y="365" width="1" height="54" fill="#000"/>
<rect x="579" y="385" width="5" height="5" fill="#000"/>
<rect x="580" y="386" width="3" height="3" fill="#fff"/>
<rect x="589" y="346" width="1" height="55" fill="#000"/>
<rect x="587" y="377" width="5" height="17" fill="#000"/>
<rect x="597" y="321" width="1" height="110" fill="#000"/>
<rect x="595" y="330" width="5" height="64" fill="#000"/>
<rect x="596" y="331" width="3" height="62" fill="#fff"/>
<rect x="605" y="303" width="1" height="64" fill="#000"/>
<rect x="603" y="327" width="5" height="34" fill="#000"/>
<rect x="613" y="291" width="1" height="76" fill="#000"/>
<rect x="611" y="321" width="5" height="42" fill="#000"/>
<rect x="612" y="322" width="3" height="40" fill="#fff"/>
<rect x="621" y="296" width="1" height="56" fill="#000"/>
<rect x="619" y="323" width="5" height="14" fill="#000"/>
<rect x="629" y="256" width="1" height="111" fill="#000"/>
<rect x="627" y="303" width="5" height="36" fill="#000"/>
<rect x="628" y="304" width="3" height="34" fill="#fff"/>
<rect x="637" y="272" width="1" height="55" fill="#000"/>
<rect x="635" y="288" width="5" height="19" fill="#000"/>
<rect x="636" y="289" width="3" height="17" fill="#fff"/>
<rect x="645" y="277" width="1" height="44" fill="#000"/>
<rect x="643" y="288" width="5" height="31" fill="#000"/>
<rect x="653" y="257" width="1" height="60" fill="#000"/>
<rect x="651" y="284" width="5" height="9" fill="#000"/>
<rect x="661" y="256" width="1" height="45" fill="#000"/>
<rect x="659" y="282" width="5" height="13" fill="#000"/>
<rect x="660" y="283" width="3" height="11" fill="#fff"/>
<rect x="669" y="280" width="1" height="99" fill="#000"/>
<rect x="667" y="282" width="5" height="75" fill="#000"/>
<rect x="677" y="336" width="1" height="68" fill="#000"/>
<rect x="675" y="353" width="5" height="4" fill="#000"/>
<rect x="676" y="354" width="3" height="2" fill="#fff"/>
<rect x="685" y="334" width="1" height="37" fill="#000"/>
<rect x="683" y="352" width="5" height="7" fill="#000"/>
<rect x="693" y="293" width="1" height="72" fill="#000"/>
<rect x="691" y="326" width="5" height="30" fill="#000"/>
<rect x="692" y="327" width="3" height="28" fill="#fff"/>
<rect x="701" y="304" width="1" height="33" fill="#000"/>
<rect x="699" y="325" width="5" height="6" fill="#000"/>
<rect x="709" y="310" width="1" height="85" fill="#000"/>
<rect x="707" y="330" width="5" height="57" fill="#000"/>
<rect x="717" y="372" width="1" height="58" fill="#000"/>
<rect x="715" y="386" width="5" height="35" fill="#000"/>
<rect x="725" y="398" width="1" height="124" fill="#000"/>
<rect x="723" y="427" width="5" height="36" fill="#000"/>
<rect x="733" y="434" width="1" height="52" fill="#000"/>
<rect x="731" y="452" width="5" height="25" fill="#000"/>
<rect x="741" y="454" width="1" height="59" fill="#000"/>
<rect x="739" y="472" width="5" height="5" fill="#000"/>
<rect x="740" y="473" width="3" height="3" fill="#fff"/>
<rect x="749" y="380" width="1" height="99" fill="#000"/>
<rect x="747" y="396" width="5" height="79" fill="#000"/>
<rect x="748" y="397" width="3" height="77" fill="#fff"/>
<rect x="757" y="295" width="1" height="116" fill="#000"/>
<rect x="755" y="330" width="5" height="70" fill="#000"/>
<rect x="756" y="331" width="3" height="68" fill="#fff"/>
<rect x="765" y="297" width="1" height="52" fill="#000"/>
<rect x="763" y="307" width="5" height="24" fill="#000"/>
<rect x="764" y="308" width="3" height="22" fill="#fff"/>
<rect x="773" y="292" width="1" height="33" fill="#000"/>
<rect x="771" y="313" width="5" height="4" fill="#000"/>
<rect x="772" y="314" width="3" height="2" fill="#fff"/>
<rect x="781" y="303" width="1" height="47" fill="#000"/>
<rect x="779" y="310" width="5" height="15" fill="#000"/>
<rect x="789" y="288" width="1" height="77" fill="#000"/>
<rect x="787" y="323" width="5" height="41" fill="#000"/>
<rect x="797" y="333" width="1" height="36" fill="#000"/>
<rect x="795" y="345" width="5" height="5" fill="#000"/>
<rect x="796" y="346" width="3" height="3" fill="#fff"/>
<rect x="805" y="313" width="1" height="41" fill="#000"/>
<rect x="803" y="335" width="5" height="12" fill="#000"/>
<rect x="804" y="336" width="3" height="10" fill="#fff"/>
<rect x="813" y="312" width="1" height="47" fill="#000"/>
<rect x="811" y="317" width="5" height="41" fill="#000"/>
<rect x="821" y="345" width="1" height="43" fill="#000"/>
<rect x="819" y="356" width="5" height="30" fill="#000"/>
<rect x="829" y="372" width="1" height="44" fill="#000"/>
<rect x="827" y="380" width="5" height="7" fill="#000"/>
<rect x="828" y="381" width="3" height="5" fill="#fff"/>
<rect x="837" y="356" width="1" height="51" fill="#000"/>
<rect x="835" y="382" width="5" height="13" fill="#000"/>
<rect x="845" y="350" width="1" height="49" fill="#000"/>
<rect x="843" y="386" width="5" height="12" fill="#000"/>
<rect x="844" y="387" width="3" height="10" fill="#fff"/>
<rect x="853" y="336" width="1" height="34" fill="#000"/>
<rect x="851" y="356" width="5" height="14" fill="#000"/>
<rect x="861" y="324" width="1" height="47" fill="#000"/>
<rect x="859" y="354" width="5" height="13" fill="#000"/>
<rect x="860" y="355" width="3" height="11" fill="#fff"/>
<rect x="869" y="280" width="1" height="81" fill="#000"/>
<rect x="867" y="296" width="5" height="60" fill="#000"/>
<rect x="868" y="297" width="3" height="58" fill="#fff"/>
<rect x="877" y="187" width="1" height="121" fill="#000"/>
<rect x="875" y="204" width="5" height="93" fill="#000"/>
<rect x="876" y="205" width="3" height="91" fill="#fff"/>
<rect x="885" y="192" width="1" height="32" fill="#000"/>
<rect x="883" y="204" width="5" height="13" fill="#000"/>
<rect x="893" y="198" width="1" height="59" fill="#000"/>
<rect x="891" y="210" width="5" height="26" fill="#000"/>
<rect x="901" y="176" width="1" height="70" fill="#000"/>
<rect x="899" y="183" width="5" height="54" fill="#000"/>
<rect x="900" y="184" width="3" height="52" fill="#fff"/>
<rect x="909" y="138" width="1" height="64" fill="#000"/>
<rect x="907" y="158" width="5" height="29" fill="#000"/>
<rect x="908" y="159" width="3" height="27" fill="#fff"/>
<rect x="917" y="142" width="1" height="58" fill="#000"/>
<rect x="915" y="159" width="5" height="28" fill="#000"/>
<rect x="925" y="173" width="1" height="61" fill="#000"/>
<rect x="923" y="184" width="5" height="16" fill="#000"/>
<rect x="933" y="149" width="1" height="53" fill="#000"/>
<rect x="931" y="161" width="5" height="31" fill="#000"/>
<rect x="932" y="162" width="3" height="29" fill="#fff"/>
<rect x="941" y="157" width="1" height="29" fill="#000"/>
<rect x="939" y="163" width="5" height="20" fill="#000"/>
<rect x="949" y="175" width="1" height="42" fill="#000"/>
<rect x="947" y="182" width="5" height="13" fill="#000"/>
<rect x="957" y="173" width="1" height="170" fill="#000"/>
<rect x="955" y="218" width="5" height="101" fill="#000"/>
<rect x="965" y="291" width="1" height="52" fill="#000"/>
<rect x="963" y="319" width="5" height="8" fill="#000"/>
<rect x="973" y="318" width="1" height="39" fill="#000"/>
<rect x="971" y="330" width="5" height="1" fill="#000"/>
<rect x="981" y="330" width="1" height="58" fill="#000"/>
<rect x="979" y="336" width="5" height="51" fill="#000"/>
<rect x="989" y="374" width="1" height="47" fill="#000"/>
<rect x="987" y="389" width="5" height="8" fill="#000"/>
<rect x="997" y="353" width="1" height="51" fill="#000"/>
<rect x="995" y="389" width="5" height="10" fill="#000"/>
<rect x="996" y="390" width="3" height="8" fill="#fff"/>
<rect x="1005" y="351" width="1" height="39" fill="#000"/>
<rect x="1003" y="372" width="5" height="17" fill="#000"/>
<rect x="1004" y="373" width="3" height="15" fill="#fff"/>
<rect x="1013" y="349" width="1" height="50" fill="#000"/>
<rect x="1011" y="356" width="5" height="39" fill="#000"/>
<rect x="1012" y="357" width="3" height="37" fill="#fff"/>
<rect x="1021" y="341" width="1" height="38" fill="#000"/>
<rect x="1019" y="356" width="5" height="15" fill="#000"/>
<rect x="1029" y="358" width="1" height="59" fill="#000"/>
<rect x="1027" y="368" width="5" height="36" fill="#000"/>
<rect x="1037" y="391" width="1" height="59" fill="#000"/>
<rect x="1035" y="401" width="5" height="46" fill="#000"/>
<rect x="1045" y="404" width="1" height="51" fill="#000"/>
<rect x="1043" y="432" width="5" height="13" fill="#000"/>
<rect x="1044" y="433" width="3" height="11" fill="#fff"/>
</g>
<text x="1030.2" y="289.8" font-size="21" fill="#0000ff" text-anchor="start" font-weight="normal" textLength="140.5" lengthAdjust="spacingAndGlyphs" >нужен возврат</text>
<rect x="14" y="113" width="228" height="10" fill="#fff" />
<path d="M16 116 L23 116 L19.5 120 Z" fill="#000"/>
<text x="28.7" y="120.8" font-size="9.6" fill="#000" text-anchor="start" font-weight="normal" textLength="63.6" lengthAdjust="spacingAndGlyphs" stroke="#000" stroke-width="0.2">AUDNZD,Daily</text>
<text x="99.7" y="120.8" font-size="9.6" fill="#000" text-anchor="start" font-weight="normal" textLength="140" lengthAdjust="spacingAndGlyphs" stroke="#000" stroke-width="0.2">1.07174 1.07579 1.07074 1.07294</text>
<path d="M1050 110 L1059 110 L1054.5 115 Z" fill="#778899"/>
<rect x="12" y="109" width="1306" height="1" fill="#000" />
<rect x="12" y="675" width="1306" height="1" fill="#000" />
<rect x="12" y="109" width="1" height="567" fill="#000" />
<rect x="1317" y="109" width="1" height="567" fill="#000" />
<rect x="1318" y="111" width="3" height="1" fill="#000" />
<text x="1323.8" y="113.5" font-size="9.2" fill="#000" text-anchor="start" font-weight="normal" textLength="32" lengthAdjust="spacingAndGlyphs" stroke="#000" stroke-width="0.2">1.10610</text>
<rect x="1318" y="144" width="3" height="1" fill="#000" />
<text x="1323.8" y="146.5" font-size="9.2" fill="#000" text-anchor="start" font-weight="normal" textLength="32" lengthAdjust="spacingAndGlyphs" stroke="#000" stroke-width="0.2">1.10270</text>
<rect x="1318" y="177" width="3" height="1" fill="#000" />
<text x="1323.8" y="179.5" font-size="9.2" fill="#000" text-anchor="start" font-weight="normal" textLength="32" lengthAdjust="spacingAndGlyphs" stroke="#000" stroke-width="0.2">1.09930</text>
<rect x="1318" y="210" width="3" height="1" fill="#000" />
<text x="1323.8" y="212.5" font-size="9.2" fill="#000" text-anchor="start" font-weight="normal" textLength="32" lengthAdjust="spacingAndGlyphs" stroke="#000" stroke-width="0.2">1.09590</text>
<rect x="1318" y="243" width="3" height="1" fill="#000" />
<text x="1323.8" y="245.5" font-size="9.2" fill="#000" text-anchor="start" font-weight="normal" textLength="32" lengthAdjust="spacingAndGlyphs" stroke="#000" stroke-width="0.2">1.09250</text>
<rect x="1318" y="276" width="3" height="1" fill="#000" />
<text x="1323.8" y="278.5" font-size="9.2" fill="#000" text-anchor="start" font-weight="normal" textLength="32" lengthAdjust="spacingAndGlyphs" stroke="#000" stroke-width="0.2">1.08910</text>
<rect x="1318" y="309" width="3" height="1" fill="#000" />
<text x="1323.8" y="311.5" font-size="9.2" fill="#000" text-anchor="start" font-weight="normal" textLength="32" lengthAdjust="spacingAndGlyphs" stroke="#000" stroke-width="0.2">1.08560</text>
<rect x="1318" y="342" width="3" height="1" fill="#000" />
<text x="1323.8" y="344.5" font-size="9.2" fill="#000" text-anchor="start" font-weight="normal" textLength="32" lengthAdjust="spacingAndGlyphs" stroke="#000" stroke-width="0.2">1.08220</text>
<rect x="1318" y="375" width="3" height="1" fill="#000" />
<text x="1323.8" y="377.5" font-size="9.2" fill="#000" text-anchor="start" font-weight="normal" textLength="32" lengthAdjust="spacingAndGlyphs" stroke="#000" stroke-width="0.2">1.07880</text>
<rect x="1318" y="408" width="3" height="1" fill="#000" />
<text x="1323.8" y="410.5" font-size="9.2" fill="#000" text-anchor="start" font-weight="normal" textLength="32" lengthAdjust="spacingAndGlyphs" stroke="#000" stroke-width="0.2">1.07540</text>
<rect x="1318" y="441" width="3" height="1" fill="#000" />
<text x="1323.8" y="443.5" font-size="9.2" fill="#000" text-anchor="start" font-weight="normal" textLength="32" lengthAdjust="spacingAndGlyphs" stroke="#000" stroke-width="0.2">1.07200</text>
<rect x="1318" y="474" width="3" height="1" fill="#000" />
<text x="1323.8" y="476.5" font-size="9.2" fill="#000" text-anchor="start" font-weight="normal" textLength="32" lengthAdjust="spacingAndGlyphs" stroke="#000" stroke-width="0.2">1.06860</text>
<rect x="1318" y="507" width="3" height="1" fill="#000" />
<text x="1323.8" y="509.5" font-size="9.2" fill="#000" text-anchor="start" font-weight="normal" textLength="32" lengthAdjust="spacingAndGlyphs" stroke="#000" stroke-width="0.2">1.06510</text>
<rect x="1318" y="540" width="3" height="1" fill="#000" />
<text x="1323.8" y="542.5" font-size="9.2" fill="#000" text-anchor="start" font-weight="normal" textLength="32" lengthAdjust="spacingAndGlyphs" stroke="#000" stroke-width="0.2">1.06170</text>
<rect x="1318" y="573" width="3" height="1" fill="#000" />
<text x="1323.8" y="575.5" font-size="9.2" fill="#000" text-anchor="start" font-weight="normal" textLength="32" lengthAdjust="spacingAndGlyphs" stroke="#000" stroke-width="0.2">1.05830</text>
<rect x="1318" y="606" width="3" height="1" fill="#000" />
<text x="1323.8" y="608.5" font-size="9.2" fill="#000" text-anchor="start" font-weight="normal" textLength="32" lengthAdjust="spacingAndGlyphs" stroke="#000" stroke-width="0.2">1.05490</text>
<rect x="1318" y="639" width="3" height="1" fill="#000" />
<text x="1323.8" y="641.5" font-size="9.2" fill="#000" text-anchor="start" font-weight="normal" textLength="32" lengthAdjust="spacingAndGlyphs" stroke="#000" stroke-width="0.2">1.05150</text>
<rect x="1318" y="672" width="3" height="1" fill="#000" />
<text x="1323.8" y="674.5" font-size="9.2" fill="#000" text-anchor="start" font-weight="normal" textLength="32" lengthAdjust="spacingAndGlyphs" stroke="#000" stroke-width="0.2">1.04810</text>
<rect x="1319" y="426" width="41" height="11" fill="#000" />
<text x="1323.8" y="434.5" font-size="9.2" fill="#fff" text-anchor="start" font-weight="normal" textLength="32" lengthAdjust="spacingAndGlyphs" stroke="#fff" stroke-width="0.2">1.07294</text>
<rect x="13" y="676" width="1" height="3" fill="#000" />
<text x="13" y="687.6" font-size="9.1" fill="#000" text-anchor="start" font-weight="normal" stroke="#000" stroke-width="0.08">30 Dec 2013</text>
<rect x="77" y="676" width="1" height="3" fill="#000" />
<text x="77" y="687.6" font-size="9.1" fill="#000" text-anchor="start" font-weight="normal" stroke="#000" stroke-width="0.08">10 Jan 2014</text>
<rect x="141" y="676" width="1" height="3" fill="#000" />
<text x="141" y="687.6" font-size="9.1" fill="#000" text-anchor="start" font-weight="normal" stroke="#000" stroke-width="0.08">22 Jan 2014</text>
<rect x="205" y="676" width="1" height="3" fill="#000" />
<text x="205" y="687.6" font-size="9.1" fill="#000" text-anchor="start" font-weight="normal" stroke="#000" stroke-width="0.08">3 Feb 2014</text>
<rect x="269" y="676" width="1" height="3" fill="#000" />
<text x="269" y="687.6" font-size="9.1" fill="#000" text-anchor="start" font-weight="normal" stroke="#000" stroke-width="0.08">13 Feb 2014</text>
<rect x="333" y="676" width="1" height="3" fill="#000" />
<text x="333" y="687.6" font-size="9.1" fill="#000" text-anchor="start" font-weight="normal" stroke="#000" stroke-width="0.08">25 Feb 2014</text>
<rect x="397" y="676" width="1" height="3" fill="#000" />
<text x="397" y="687.6" font-size="9.1" fill="#000" text-anchor="start" font-weight="normal" stroke="#000" stroke-width="0.08">7 Mar 2014</text>
<rect x="461" y="676" width="1" height="3" fill="#000" />
<text x="461" y="687.6" font-size="9.1" fill="#000" text-anchor="start" font-weight="normal" stroke="#000" stroke-width="0.08">19 Mar 2014</text>
<rect x="525" y="676" width="1" height="3" fill="#000" />
<text x="525" y="687.6" font-size="9.1" fill="#000" text-anchor="start" font-weight="normal" stroke="#000" stroke-width="0.08">30 Mar 2014</text>
<rect x="589" y="676" width="1" height="3" fill="#000" />
<text x="589" y="687.6" font-size="9.1" fill="#000" text-anchor="start" font-weight="normal" stroke="#000" stroke-width="0.08">9 Apr 2014</text>
<rect x="653" y="676" width="1" height="3" fill="#000" />
<text x="653" y="687.6" font-size="9.1" fill="#000" text-anchor="start" font-weight="normal" stroke="#000" stroke-width="0.08">21 Apr 2014</text>
<rect x="717" y="676" width="1" height="3" fill="#000" />
<text x="717" y="687.6" font-size="9.1" fill="#000" text-anchor="start" font-weight="normal" stroke="#000" stroke-width="0.08">1 May 2014</text>
<rect x="781" y="676" width="1" height="3" fill="#000" />
<text x="781" y="687.6" font-size="9.1" fill="#000" text-anchor="start" font-weight="normal" stroke="#000" stroke-width="0.08">13 May 2014</text>
<rect x="845" y="676" width="1" height="3" fill="#000" />
<text x="845" y="687.6" font-size="9.1" fill="#000" text-anchor="start" font-weight="normal" stroke="#000" stroke-width="0.08">23 May 2014</text>
<rect x="909" y="676" width="1" height="3" fill="#000" />
<text x="909" y="687.6" font-size="9.1" fill="#000" text-anchor="start" font-weight="normal" stroke="#000" stroke-width="0.08">4 Jun 2014</text>
<rect x="973" y="676" width="1" height="3" fill="#000" />
<text x="973" y="687.6" font-size="9.1" fill="#000" text-anchor="start" font-weight="normal" stroke="#000" stroke-width="0.08">16 Jun 2014</text>
<rect x="1037" y="676" width="1" height="3" fill="#000" />
<text x="1037" y="687.6" font-size="9.1" fill="#000" text-anchor="start" font-weight="normal" stroke="#000" stroke-width="0.08">26 Jun 2014</text>
<rect x="8" y="696" width="1354" height="19" fill="#ececec" />
<rect x="8" y="696" width="2" height="18" fill="#8a8a8a" />
<rect x="972.5" y="695.5" width="91" height="18" fill="#ffffff" stroke="#000" stroke-width="1"/>
<rect x="973" y="695" width="90" height="1.5" fill="#ffffff"/>
<text x="21" y="708.2" font-size="11.2" fill="#6b7488" text-anchor="start" font-weight="normal" textLength="67" lengthAdjust="spacingAndGlyphs" stroke="#6b7488" stroke-width="0.15">EURUSD,Daily</text>
<text x="110.4" y="708.2" font-size="11.2" fill="#6b7488" text-anchor="start" font-weight="normal" textLength="66" lengthAdjust="spacingAndGlyphs" stroke="#6b7488" stroke-width="0.15">GBPUSD,Daily</text>
<text x="199" y="708.2" font-size="11.2" fill="#6b7488" text-anchor="start" font-weight="normal" textLength="64.2" lengthAdjust="spacingAndGlyphs" stroke="#6b7488" stroke-width="0.15">USDJPY,Daily</text>
<text x="287.3" y="708.2" font-size="11.2" fill="#6b7488" text-anchor="start" font-weight="normal" textLength="63.8" lengthAdjust="spacingAndGlyphs" stroke="#6b7488" stroke-width="0.15">EURJPY,Daily</text>
<text x="374.5" y="708.2" font-size="11.2" fill="#6b7488" text-anchor="start" font-weight="normal" textLength="66" lengthAdjust="spacingAndGlyphs" stroke="#6b7488" stroke-width="0.15">GBPCHF,Daily</text>
<text x="463.9" y="708.2" font-size="11.2" fill="#6b7488" text-anchor="start" font-weight="normal" textLength="67" lengthAdjust="spacingAndGlyphs" stroke="#6b7488" stroke-width="0.15">AUDUSD,Daily</text>
<text x="553.3" y="708.2" font-size="11.2" fill="#6b7488" text-anchor="start" font-weight="normal" textLength="67" lengthAdjust="spacingAndGlyphs" stroke="#6b7488" stroke-width="0.15">NZDUSD,Daily</text>
<text x="641.5" y="708.2" font-size="11.2" fill="#6b7488" text-anchor="start" font-weight="normal" textLength="66.4" lengthAdjust="spacingAndGlyphs" stroke="#6b7488" stroke-width="0.15">EURCHF,Daily</text>
<text x="730.4" y="708.2" font-size="11.2" fill="#6b7488" text-anchor="start" font-weight="normal" textLength="58" lengthAdjust="spacingAndGlyphs" stroke="#6b7488" stroke-width="0.15">XAUUSD,H4</text>
<text x="810.1" y="708.2" font-size="11.2" fill="#6b7488" text-anchor="start" font-weight="normal" textLength="66.5" lengthAdjust="spacingAndGlyphs" stroke="#6b7488" stroke-width="0.15">EURGBP,Daily</text>
<text x="897.8" y="708.2" font-size="11.2" fill="#6b7488" text-anchor="start" font-weight="normal" textLength="62.6" lengthAdjust="spacingAndGlyphs" stroke="#6b7488" stroke-width="0.15">GBPJPY,Daily</text>
<text x="984" y="708.2" font-size="11.2" fill="#000" text-anchor="start" font-weight="normal" textLength="67" lengthAdjust="spacingAndGlyphs" stroke="#000" stroke-width="0.15">AUDNZD,Daily</text>
<text x="1075.4" y="708.2" font-size="11.2" fill="#6b7488" text-anchor="start" font-weight="normal" textLength="67.5" lengthAdjust="spacingAndGlyphs" stroke="#6b7488" stroke-width="0.15">USDCAD,Daily</text>
<text x="1165.2" y="708.2" font-size="11.2" fill="#6b7488" text-anchor="start" font-weight="normal" textLength="78.8" lengthAdjust="spacingAndGlyphs" stroke="#6b7488" stroke-width="0.15">USDCHF,Weekly</text>
<rect x="100" y="699" width="1" height="12" fill="#555" />
<rect x="188" y="699" width="1" height="12" fill="#555" />
<rect x="276" y="699" width="1" height="12" fill="#555" />
<rect x="364" y="699" width="1" height="12" fill="#555" />
<rect x="452" y="699" width="1" height="12" fill="#555" />
<rect x="544" y="699" width="1" height="12" fill="#555" />
<rect x="632" y="699" width="1" height="12" fill="#555" />
<rect x="721" y="699" width="1" height="12" fill="#555" />
<rect x="801" y="699" width="1" height="12" fill="#555" />
<rect x="889" y="699" width="1" height="12" fill="#555" />
<rect x="1156" y="699" width="1" height="12" fill="#555" />
<rect x="1256" y="699" width="1" height="12" fill="#555" />
<path d="M1338 702 L1338 708 L1335 705 Z" fill="#888"/><path d="M1351 702 L1351 708 L1354 705 Z" fill="#888"/>
<rect x="8" y="715" width="1354" height="21" fill="#f0f0f0" />
<text x="10" y="731.4" font-size="11.6" fill="#000" text-anchor="start" font-weight="normal" textLength="135" lengthAdjust="spacingAndGlyphs" >Для справки, нажмите F1</text>
<rect x="636" y="719" width="1" height="16" fill="#a0a0a0" />
<rect x="752" y="719" width="1" height="16" fill="#a0a0a0" />
<rect x="854" y="719" width="1" height="16" fill="#a0a0a0" />
<rect x="925" y="719" width="1" height="16" fill="#a0a0a0" />
<rect x="996" y="719" width="1" height="16" fill="#a0a0a0" />
<rect x="1064" y="719" width="1" height="16" fill="#a0a0a0" />
<rect x="1134" y="719" width="1" height="16" fill="#a0a0a0" />
<rect x="1200" y="719" width="1" height="16" fill="#a0a0a0" />
<text x="641" y="731.4" font-size="11.6" fill="#000" text-anchor="start" font-weight="normal" >Default</text>
<rect x="1206" y="721" width="2" height="5.0" fill="#2d7a18"/>
<rect x="1206" y="732.0" width="2" height="1.0" fill="#b51a1a"/>
<rect x="1209" y="721" width="2" height="5.4" fill="#2d7a18"/>
<rect x="1209" y="730.9" width="2" height="2.1" fill="#b51a1a"/>
<rect x="1212" y="721" width="2" height="5.8" fill="#2d7a18"/>
<rect x="1212" y="729.8" width="2" height="3.2" fill="#b51a1a"/>
<rect x="1215" y="721" width="2" height="6.2" fill="#2d7a18"/>
<rect x="1215" y="728.7" width="2" height="4.300000000000001" fill="#b51a1a"/>
<rect x="1218" y="721" width="2" height="6.6" fill="#2d7a18"/>
<rect x="1218" y="727.6" width="2" height="5.4" fill="#b51a1a"/>
<rect x="1221" y="721" width="2" height="7.0" fill="#2d7a18"/>
<rect x="1221" y="726.5" width="2" height="6.5" fill="#b51a1a"/>
<rect x="1224" y="721" width="2" height="7.4" fill="#2d7a18"/>
<rect x="1224" y="725.4" width="2" height="7.6000000000000005" fill="#b51a1a"/>
<rect x="1227" y="721" width="2" height="7.800000000000001" fill="#2d7a18"/>
<rect x="1227" y="724.3" width="2" height="8.700000000000001" fill="#b51a1a"/>
<text x="1268.7" y="731.4" font-size="11.6" fill="#000" text-anchor="start" font-weight="normal" textLength="37.3" lengthAdjust="spacingAndGlyphs" >80/2 kb</text>
<path d="M1349 734 L1360 723 M1352 734 L1360 726 M1355 734 L1360 729" stroke="#a0a0a0" stroke-width="1"/>
<rect x="8" y="736" width="1354" height="8" fill="#c39a5c" />
<rect x="8" y="736" width="1354" height="1" fill="#8a6a3a" />
<rect x="60.5" y="737.5" width="58" height="8" fill="#d2b088" stroke="#e8d6bd" stroke-width="1"/>
<rect x="246.5" y="737.5" width="58" height="8" fill="#d2b088" stroke="#e8d6bd" stroke-width="1"/>
<rect x="308.5" y="737.5" width="58" height="8" fill="#d2b088" stroke="#e8d6bd" stroke-width="1"/>
<ellipse cx="88" cy="744" rx="8" ry="3.5" fill="#e24a3b"/>
<rect x="136" y="739" width="30" height="6" fill="#0f8a20" />
<path d="M196 744 L216 739 L216 744 Z" fill="#2b4f9a"/>
<ellipse cx="271" cy="744" rx="10" ry="4" fill="#1e9be0"/>
<ellipse cx="337" cy="744" rx="12" ry="4.5" fill="#f39a2a"/>
<path d="M29 744 L45 740 L45 744 Z" fill="#f0f0f0"/>
</svg>
</body></html>
